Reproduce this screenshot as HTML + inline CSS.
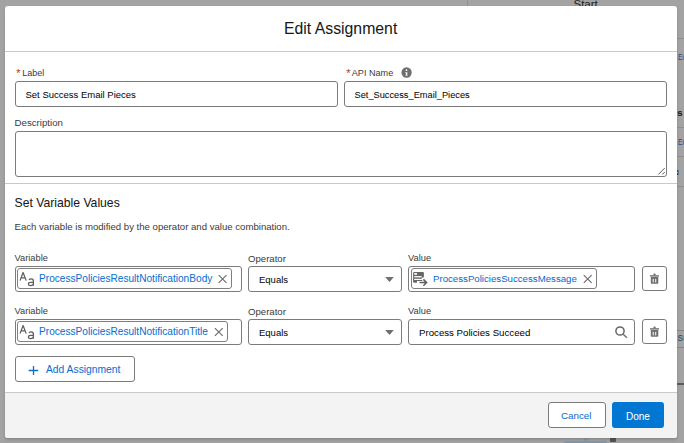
<!DOCTYPE html>
<html><head><meta charset="utf-8">
<style>
*{box-sizing:border-box;margin:0;padding:0}
html,body{width:684px;height:443px;overflow:hidden}
body{position:relative;background:#a3a3a3;font-family:"Liberation Sans",sans-serif;color:#080707}
.a{position:absolute;white-space:nowrap;line-height:1;-webkit-text-stroke:0.04px currentColor}
.bg-line{position:absolute;background:#8f8f8f}
#modal{position:absolute;left:5px;top:6px;width:672px;height:432px;background:#fff;border-radius:3px;overflow:hidden;box-shadow:0 2px 3px rgba(0,0,0,.16)}
.box{position:absolute;border:1px solid #7b7b7b;border-radius:3px;background:#fff}
.pill{position:absolute;border:1px solid #7f7f7f;border-radius:3px;background:#fff}
.lbl{font-size:9.3px;color:#3a3a3a;-webkit-text-stroke:0}
.req{color:#c23934}
.blue{color:#0b6fd0}
</style></head>
<body>
<!-- background canvas -->
<div class="bg-line" style="left:467px;top:0;width:1px;height:6px"></div>
<div class="a" style="left:573.5px;top:-1.5px;font-size:11.5px;color:#1e1e1e">Start</div>
<div class="bg-line" style="left:677px;top:38px;width:7px;height:1px"></div>
<div class="bg-line" style="left:677px;top:127px;width:7px;height:1px"></div>
<div class="bg-line" style="left:677px;top:156px;width:7px;height:1px"></div>
<div class="bg-line" style="left:677px;top:186px;width:7px;height:1px"></div>
<div class="bg-line" style="left:677px;top:330px;width:7px;height:1px;background:#858585"></div>
<div class="bg-line" style="left:677px;top:347px;width:7px;height:1px;background:#858585"></div>
<div class="bg-line" style="left:677px;top:383px;width:7px;height:1.5px;background:#5a5a5a"></div>
<div class="a" style="left:677.5px;top:52.3px;font-size:9.5px;color:#1d4f8f;transform:scaleX(.72);transform-origin:0 0">Ec</div>
<div class="a" style="left:677.3px;top:108px;font-size:9.5px;color:#1a1a1a;font-weight:bold">s</div>
<div class="a" style="left:677.5px;top:137.3px;font-size:9.5px;color:#1d4f8f;transform:scaleX(.72);transform-origin:0 0">Ec</div>
<div style="position:absolute;left:677px;top:170px;width:1.5px;height:1.5px;background:#1d4f8f"></div>
<div style="position:absolute;left:677px;top:173.3px;width:1.5px;height:1.5px;background:#1d4f8f"></div>
<div style="position:absolute;left:677.7px;top:170px;width:0.8px;height:4.8px;background:#5f7d9f"></div>
<div class="a" style="left:677.5px;top:334.3px;font-size:8.5px;color:#2a4670">Su</div>
<div style="position:absolute;left:563px;top:441px;width:45px;height:8px;border-radius:6px;background:#8097ad"></div>
<div style="position:absolute;left:582px;top:437px;width:0;height:0;border-left:4.5px solid transparent;border-right:4.5px solid transparent;border-top:5px solid #8e9aa5"></div>
<div style="position:absolute;left:610px;top:438px;width:6px;height:4px;background:#555;border-radius:0 0 1px 1px"></div>
<div id="modal">
  <!-- header -->
  <div class="a" style="left:279px;top:15px;font-size:15.8px;color:#181818">Edit Assignment</div>
  <div style="position:absolute;left:0;top:45px;width:672px;height:1px;background:#c9c9c9"></div>

  <!-- Label / API name -->
  <div class="a req" style="left:11.3px;top:62px;font-size:11px">*</div>
  <div class="a lbl" style="left:17.3px;top:63px;font-size:9px">Label</div>
  <div class="box" style="left:10px;top:75px;width:323px;height:26px"></div>
  <div class="a" style="left:20.5px;top:84px;font-size:9.5px">Set Success Email Pieces</div>

  <div class="a req" style="left:341.2px;top:62px;font-size:11px">*</div>
  <div class="a lbl" style="left:346.8px;top:63px;font-size:9.1px">API Name</div>
    <div class="box" style="left:339px;top:75px;width:323px;height:26px"></div>
  <div class="a" style="left:349.5px;top:84.8px;font-size:9.25px">Set_Success_Email_Pieces</div>

  <!-- description -->
  <div class="a lbl" style="left:9.5px;top:112.2px;font-size:9.7px">Description</div>
  <div class="box" style="left:10px;top:125px;width:652px;height:46px"></div>

  <div style="position:absolute;left:0;top:177px;width:672px;height:1px;background:#c9c9c9"></div>

  <div class="a" style="left:9.5px;top:191px;font-size:12.2px;color:#181818">Set Variable Values</div>
  <div class="a" style="left:9.5px;top:216px;font-size:9.6px;color:#3a3a3a;-webkit-text-stroke:0">Each variable is modified by the operator and value combination.</div>

  <!-- row 1 -->
  <div class="a lbl" style="left:9.5px;top:248px">Variable</div>
  <div class="box" style="left:10px;top:260px;width:227px;height:26px"></div>
  <div class="pill" style="left:12px;top:262px;width:215px;height:21px"></div>
  <div class="a blue" style="left:34px;top:267.5px;font-size:10.15px">ProcessPoliciesResultNotificationBody</div>

  <div class="a lbl" style="left:243px;top:247.5px;font-size:9.6px">Operator</div>
  <div class="box" style="left:243px;top:260px;width:154px;height:26px"></div>
  <div class="a" style="left:254px;top:269px;font-size:9.5px">Equals</div>

  <div class="a lbl" style="left:403px;top:248px">Value</div>
  <div class="box" style="left:403px;top:260px;width:227px;height:26px"></div>
  <div class="pill" style="left:406px;top:262px;width:186px;height:21px"></div>
  <div class="a blue" style="left:428px;top:267.5px;font-size:9.66px">ProcessPoliciesSuccessMessage</div>

  <div class="box" style="left:637px;top:260px;width:25px;height:25px"></div>

  <!-- row 2 -->
  <div class="a lbl" style="left:9.5px;top:301px">Variable</div>
  <div class="box" style="left:10px;top:313px;width:227px;height:26px"></div>
  <div class="pill" style="left:12px;top:315px;width:211px;height:21px"></div>
  <div class="a blue" style="left:34px;top:320.5px;font-size:10.15px">ProcessPoliciesResultNotificationTitle</div>

  <div class="a lbl" style="left:243px;top:300.5px;font-size:9.6px">Operator</div>
  <div class="box" style="left:243px;top:313px;width:154px;height:26px"></div>
  <div class="a" style="left:254px;top:322px;font-size:9.5px">Equals</div>

  <div class="a lbl" style="left:403px;top:301px">Value</div>
  <div class="box" style="left:403px;top:313px;width:227px;height:26px"></div>
  <div class="a" style="left:414px;top:322px;font-size:9.69px">Process Policies Succeed</div>

  <div class="box" style="left:637px;top:313px;width:25px;height:25px"></div>

  <!-- add assignment -->
  <div class="box" style="left:10px;top:350px;width:120px;height:26px"></div>
  <div class="a blue" style="left:41px;top:359px;font-size:10.3px">Add Assignment</div>

  <!-- footer -->
  <div style="position:absolute;left:0;top:386px;width:672px;height:46px;background:#f3f3f3;border-top:1px solid #c9c9c9"></div>
  <div class="box" style="left:543px;top:396px;width:58px;height:26px"></div>
  <div class="a blue" style="left:556px;top:405px;font-size:9.8px">Cancel</div>
  <div style="position:absolute;left:607px;top:396px;width:52px;height:26px;background:#0176d3;border-radius:3px"></div>
  <div class="a" style="left:621px;top:405.5px;font-size:10px;color:#fff">Done</div>
</div>
<svg style="position:absolute;left:0;top:0" width="684" height="443" viewBox="0 0 684 443">
<g fill="none" stroke="#6f6f6f" stroke-width="1">
 <!-- info -->
</g>
<circle cx="406.6" cy="72.5" r="5.15" fill="#6f6f6f"/>
<circle cx="406.5" cy="70.2" r="0.85" fill="#fff"/>
<path d="M405.3 72.2 H407.3 V74.9 H407.9 V75.6 H405.1 V74.9 H405.9 V72.9 H405.3 Z" fill="#fff"/>
<!-- Aa icons -->
<g fill="none" stroke="#5f5f5f" stroke-width="1.25" stroke-linejoin="round">
 <path d="M20 280.6 L23.1 272.5 L26.2 280.6 M21.1 277.9 H25.1"/>
 <path d="M29 280 C29.5 279.2 30.3 278.9 31.1 278.9 C32.7 278.9 33.4 279.7 33.4 281.1 V285.7 M33.4 282.3 H30.8 C29.3 282.3 28.4 282.9 28.4 284 C28.4 285.1 29.2 285.6 30.4 285.6 C31.9 285.6 33.4 284.8 33.4 283.5"/>
 <g transform="translate(0,53)">
 <path d="M20 280.6 L23.1 272.5 L26.2 280.6 M21.1 277.9 H25.1"/>
 <path d="M29 280 C29.5 279.2 30.3 278.9 31.1 278.9 C32.7 278.9 33.4 279.7 33.4 281.1 V285.7 M33.4 282.3 H30.8 C29.3 282.3 28.4 282.9 28.4 284 C28.4 285.1 29.2 285.6 30.4 285.6 C31.9 285.6 33.4 284.8 33.4 283.5"/>
 </g>
</g>
<!-- X icons -->
<g fill="none" stroke="#6f6f6f" stroke-width="1.2">
 <path d="M218.7 275.1 L226.5 282.9 M226.5 275.1 L218.7 282.9"/>
 <path d="M214.9 328.1 L222.7 335.9 M222.7 328.1 L214.9 335.9"/>
 <path d="M583.8 275.1 L591.6 282.9 M591.6 275.1 L583.8 282.9"/>
</g>
<!-- formula icon -->
<rect x="413.1" y="272" width="10.8" height="10.8" rx="1" fill="#666"/>
<rect x="414.2" y="273.1" width="2.8" height="1.7" fill="#fff"/>
<rect x="414.2" y="276.1" width="7.5" height="1.3" fill="#fff"/>
<rect x="414.2" y="278.8" width="7.5" height="1.2" fill="#fff"/>
<path d="M418.6 282.6 H426.5 M423.2 279.2 L426.7 282.6 L423.2 286" fill="none" stroke="#fff" stroke-width="3.2" stroke-linecap="square"/>
<path d="M419.5 282.6 H426.3 M423.4 279.4 L426.6 282.6 L423.4 285.8" fill="none" stroke="#5f5f5f" stroke-width="1.5"/>
<!-- dropdown triangles -->
<path d="M385.2 277.1 H393.8 L389.5 282 Z" fill="#6f6f6f"/>
<path d="M385.2 330.1 H393.8 L389.5 335 Z" fill="#6f6f6f"/>
<!-- search -->
<circle cx="620" cy="331" r="4.1" fill="none" stroke="#666" stroke-width="1.5"/>
<path d="M623.2 334.2 L626.9 337.8" stroke="#6f6f6f" stroke-width="1.4"/>
<!-- trash -->
<g id="tr" fill="#6f6f6f">
 <rect x="650" y="275.2" width="9" height="1.4"/>
 <rect x="653.4" y="273.5" width="2.3" height="2" rx="1"/>
 <path d="M650.8 277 H658.3 V282.9 Q658.3 283.7 657.5 283.7 H651.6 Q650.8 283.7 650.8 282.9 Z"/>
 <rect x="652.7" y="278.9" width="1" height="3.5" fill="#fff"/>
 <rect x="655.2" y="278.9" width="1" height="3.5" fill="#fff"/>
</g>
<use href="#tr" transform="translate(0,53)"/>
<!-- resize handle -->
<path d="M658.4 174.4 L664.7 168.1 M662.4 174.4 L664.7 172.1" stroke="#5a5a5a" stroke-width="1"/>
<!-- plus -->
<path d="M28.7 370.5 H38.2 M33.5 365.9 V375.1" stroke="#0b6fd0" stroke-width="1.3"/>
</svg>
</body></html>
